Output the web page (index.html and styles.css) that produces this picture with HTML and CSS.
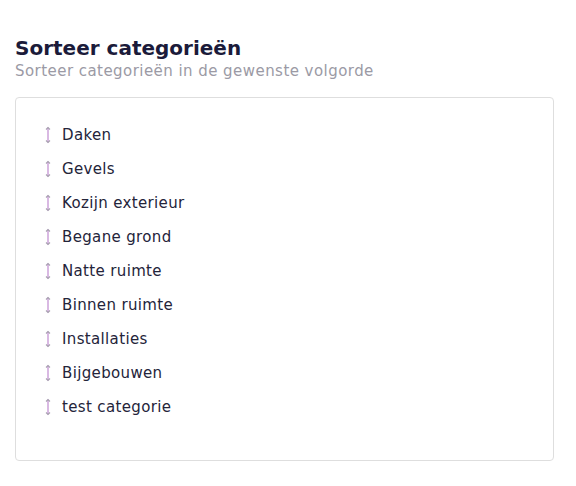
FILE: index.html
```html
<!DOCTYPE html>
<html>
<head>
<meta charset="utf-8">
<link rel="stylesheet" href="styles.css">
</head>
<body>
<div class="page">
  <h2 class="title">Sorteer categorieën</h2>
  <p class="subtitle">Sorteer categorieën in de gewenste volgorde</p>
  <div class="card">
    <ul class="list">
      <li class="item"><svg class="handle" viewBox="0 0 8 18"><path d="M4 1.5V16.5" stroke="#c08ad0" stroke-width="1.2"/><path d="M2 3.5L4 1.5L6 3.5M2 14.5L4 16.5L6 14.5" fill="none" stroke="#a8a0b0" stroke-width="1.1"/></svg><span>Daken</span></li>
      <li class="item"><svg class="handle" viewBox="0 0 8 18"><path d="M4 1.5V16.5" stroke="#c08ad0" stroke-width="1.2"/><path d="M2 3.5L4 1.5L6 3.5M2 14.5L4 16.5L6 14.5" fill="none" stroke="#a8a0b0" stroke-width="1.1"/></svg><span>Gevels</span></li>
      <li class="item"><svg class="handle" viewBox="0 0 8 18"><path d="M4 1.5V16.5" stroke="#c08ad0" stroke-width="1.2"/><path d="M2 3.5L4 1.5L6 3.5M2 14.5L4 16.5L6 14.5" fill="none" stroke="#a8a0b0" stroke-width="1.1"/></svg><span>Kozijn exterieur</span></li>
      <li class="item"><svg class="handle" viewBox="0 0 8 18"><path d="M4 1.5V16.5" stroke="#c08ad0" stroke-width="1.2"/><path d="M2 3.5L4 1.5L6 3.5M2 14.5L4 16.5L6 14.5" fill="none" stroke="#a8a0b0" stroke-width="1.1"/></svg><span>Begane grond</span></li>
      <li class="item"><svg class="handle" viewBox="0 0 8 18"><path d="M4 1.5V16.5" stroke="#c08ad0" stroke-width="1.2"/><path d="M2 3.5L4 1.5L6 3.5M2 14.5L4 16.5L6 14.5" fill="none" stroke="#a8a0b0" stroke-width="1.1"/></svg><span>Natte ruimte</span></li>
      <li class="item"><svg class="handle" viewBox="0 0 8 18"><path d="M4 1.5V16.5" stroke="#c08ad0" stroke-width="1.2"/><path d="M2 3.5L4 1.5L6 3.5M2 14.5L4 16.5L6 14.5" fill="none" stroke="#a8a0b0" stroke-width="1.1"/></svg><span>Binnen ruimte</span></li>
      <li class="item"><svg class="handle" viewBox="0 0 8 18"><path d="M4 1.5V16.5" stroke="#c08ad0" stroke-width="1.2"/><path d="M2 3.5L4 1.5L6 3.5M2 14.5L4 16.5L6 14.5" fill="none" stroke="#a8a0b0" stroke-width="1.1"/></svg><span>Installaties</span></li>
      <li class="item"><svg class="handle" viewBox="0 0 8 18"><path d="M4 1.5V16.5" stroke="#c08ad0" stroke-width="1.2"/><path d="M2 3.5L4 1.5L6 3.5M2 14.5L4 16.5L6 14.5" fill="none" stroke="#a8a0b0" stroke-width="1.1"/></svg><span>Bijgebouwen</span></li>
      <li class="item"><svg class="handle" viewBox="0 0 8 18"><path d="M4 1.5V16.5" stroke="#c08ad0" stroke-width="1.2"/><path d="M2 3.5L4 1.5L6 3.5M2 14.5L4 16.5L6 14.5" fill="none" stroke="#a8a0b0" stroke-width="1.1"/></svg><span>test categorie</span></li>
    </ul>
  </div>
</div>
</body>
</html>
```
FILE: styles.css
```css
html, body {
  margin: 0;
  padding: 0;
  background: #ffffff;
}
.page {
  padding: 36px 22px 0 15px;
  font-family: "DejaVu Sans", "Noto Sans", sans-serif;
}
.title {
  margin: 0;
  font-size: 20px;
  line-height: 24px;
  font-weight: 700;
  color: #1b1b3a;
}
.subtitle {
  margin: 1px 0 0 0;
  font-size: 15px;
  line-height: 20px;
  letter-spacing: 0.45px;
  color: #9b9aa5;
}
.card {
  margin-top: 16px;
  border: 1px solid #dedede;
  border-radius: 4px;
  height: 364px;
  box-sizing: border-box;
  padding: 20px 28px;
}
.list {
  list-style: none;
  margin: 0;
  padding: 0;
}
.item {
  display: flex;
  align-items: center;
  height: 34px;
  font-size: 15px;
  letter-spacing: 0.35px;
  color: #24243a;
}
.handle {
  width: 8px;
  height: 18px;
  margin-right: 10px;
  flex: none;
}
```
